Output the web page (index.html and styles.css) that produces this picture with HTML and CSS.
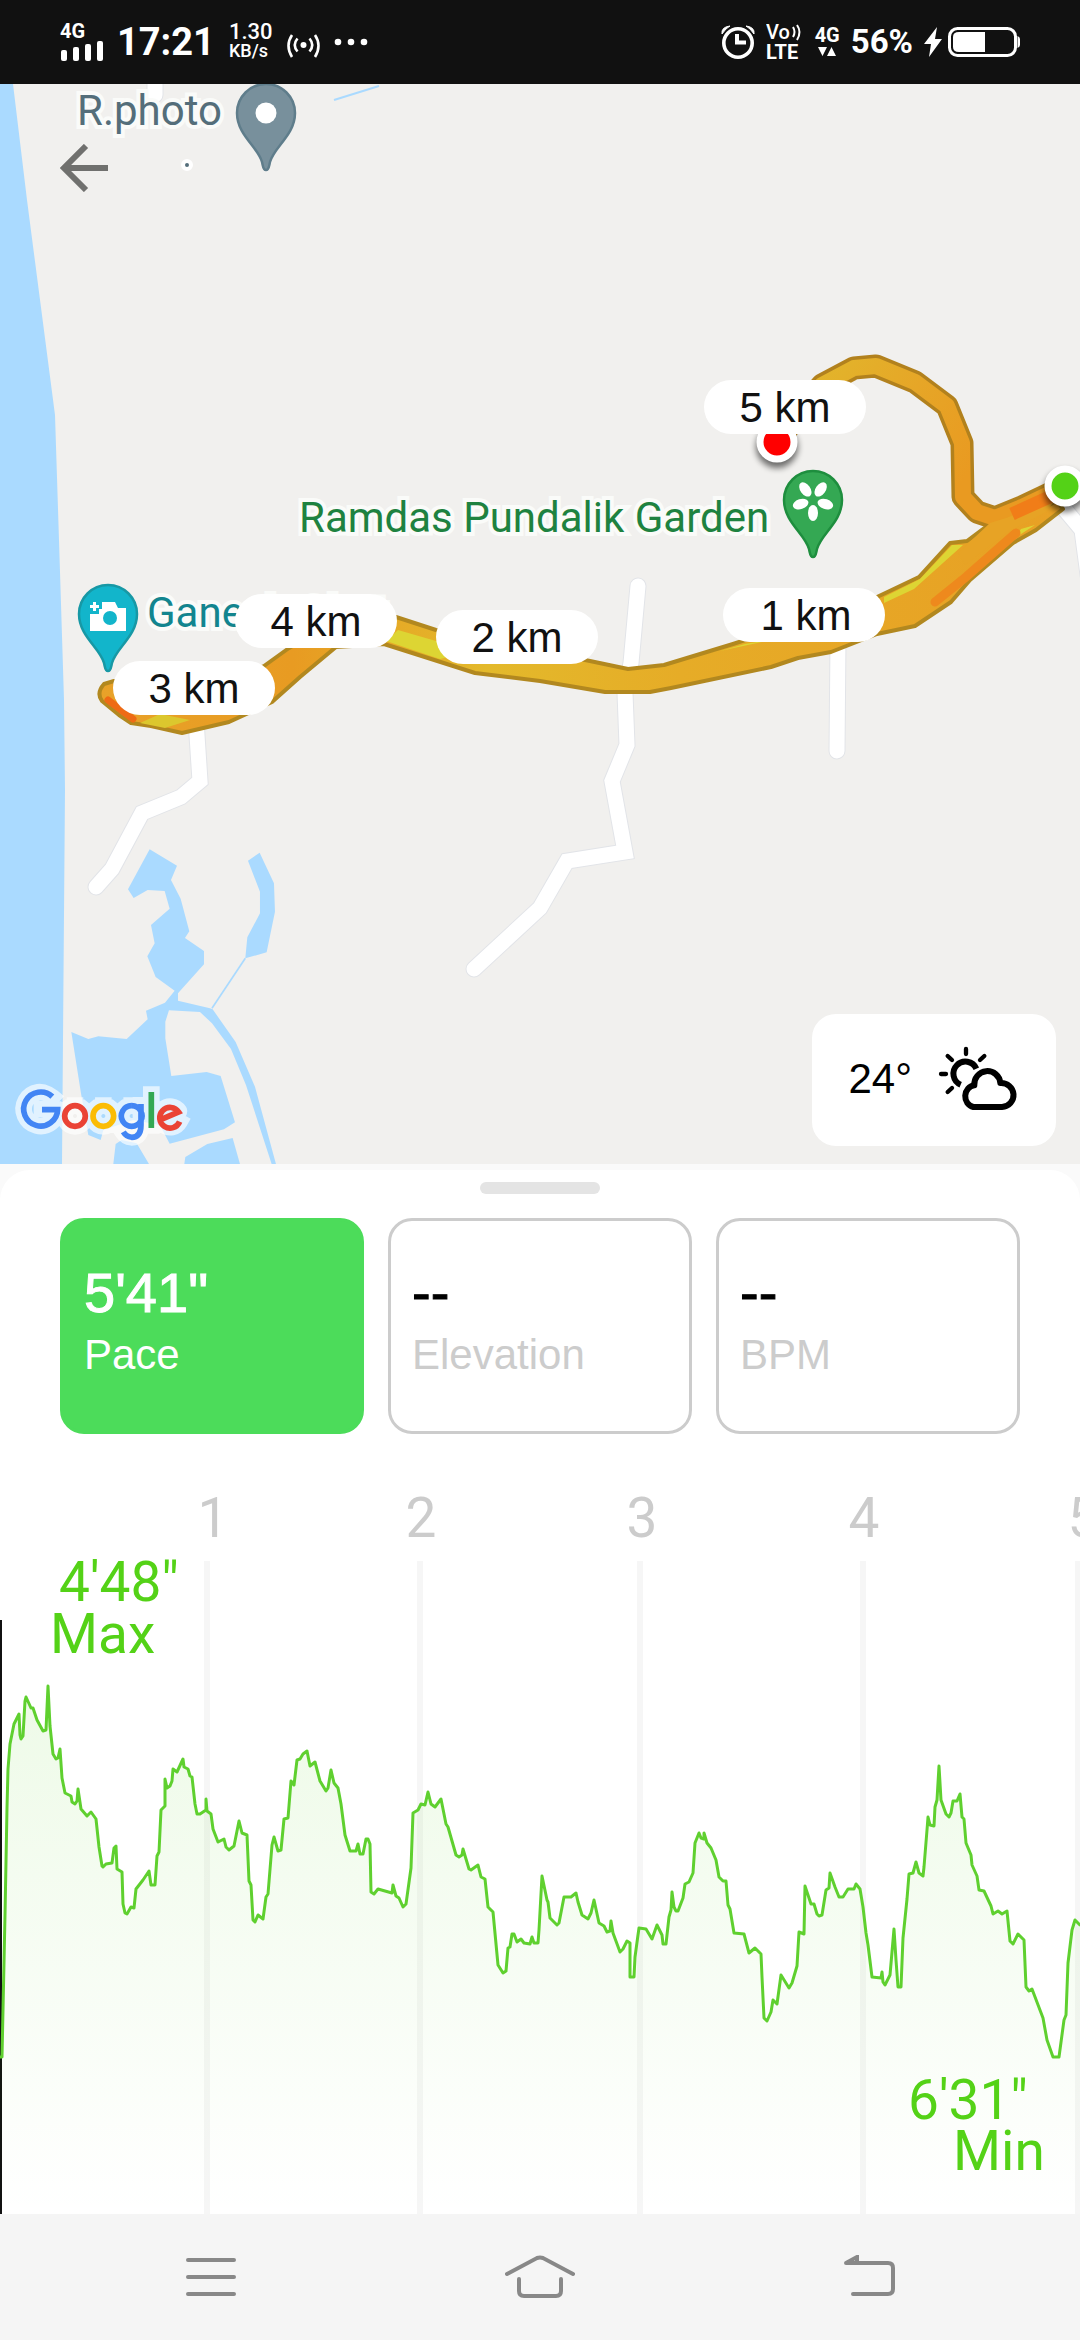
FILE: index.html
```html
<!DOCTYPE html>
<html lang="en">
<head>
<meta charset="utf-8">
<meta name="viewport" content="width=device-width, initial-scale=1">
<title>Run details</title>
<link rel="stylesheet" href="styles.css">
</head>
<body>
<header class="status">
  <div class="status-group status-left">
    <div class="signal">
      <span class="net">4G</span>
      <svg width="43" height="20" viewBox="0 0 43 20" fill="#fff"><rect x="1" y="9" width="6" height="11" rx="2"/><rect x="13" y="6" width="6" height="14" rx="2"/><rect x="25" y="3" width="6" height="17" rx="2"/><rect x="37" y="0" width="6" height="20" rx="2"/></svg>
    </div>
    <time class="clock">17:21</time>
    <div class="speed"><span class="speed-value">1.30</span><span class="speed-unit">KB/s</span></div>
    <svg class="low" width="33" height="24" viewBox="0 0 33 24" fill="none" stroke="#fff" stroke-width="2.6"><circle cx="16.500" cy="11" r="3" fill="#fff" stroke="none"/><path d="M10.500 4.500Q5 11 10.500 17.500M22.500 4.500Q28 11 22.500 17.500M5 1Q-2 11.500 5 23M28 1Q35 11.500 28 23"/></svg>
    <svg width="34" height="8" viewBox="0 0 34 8" fill="#fff"><circle cx="4" cy="4" r="3.300"/><circle cx="17" cy="4" r="3.300"/><circle cx="30" cy="4" r="3.300"/></svg>
  </div>
  <div class="status-group status-right">
    <svg width="34" height="36" viewBox="0 0 34 36" fill="none" stroke="#fff"><circle cx="17" cy="19" r="14.200" stroke-width="3.600"/><path d="M16 10V18.500H25" stroke-width="4"/><path d="M1 10Q0 3 9 2Q5 4 1 10ZM33 10Q34 3 25 2Q29 4 33 10Z" fill="#fff" stroke-width="1"/></svg>
    <svg class="volte" width="38" height="42" viewBox="0 0 38 42"><text x="0" y="18" class="volte-top">Vo</text><path d="M27 6Q30 11 27 16M31 4Q36 11 31 19" fill="none" stroke="#fff" stroke-width="2"/><text x="0" y="38" class="volte-bottom">LTE</text></svg>
    <div class="signal"><span class="net">4G</span><svg width="24" height="12" viewBox="0 0 24 12" fill="#fff"><path d="M3 2H12L7.500 11ZM12 11H21L16.500 2Z"/></svg></div>
    <span class="percent">56%</span>
    <svg width="96" height="30" viewBox="0 0 96 30"><path d="M13 0L0 17H7L5 30L18 12H11Z" fill="#fff"/><rect x="25.500" y="1.500" width="66" height="27" rx="8" fill="none" stroke="#fff" stroke-width="3"/><path d="M35 5H61V25H35Q29 25 29 20V10Q29 5 35 5Z" fill="#fff"/><path d="M93.500 9Q96 10 96 12V18Q96 20 93.500 21Z" fill="#fff"/></svg>
  </div>
</header>

<section class="map" aria-label="Route map">
  <svg class="map-canvas" viewBox="0 84 1080 1080">
    <defs>
      <linearGradient id="route" gradientUnits="userSpaceOnUse" x1="99" y1="0" x2="1070" y2="0">
        <stop offset="0" stop-color="#e8a229"/><stop offset=".2" stop-color="#e89b22"/><stop offset=".4" stop-color="#e3b92b"/><stop offset=".6" stop-color="#e6ac27"/><stop offset="1" stop-color="#e8a024"/>
      </linearGradient>
      <linearGradient id="loop" gradientUnits="userSpaceOnUse" x1="820" y1="370" x2="970" y2="470">
        <stop offset="0" stop-color="#e2b42b"/><stop offset=".5" stop-color="#e6a627"/><stop offset="1" stop-color="#e99a21"/>
      </linearGradient>
      <filter id="soft" x="-50%" y="-50%" width="200%" height="200%"><feGaussianBlur stdDeviation="3"/></filter>
      <path id="pin" d="M0 57C-3 57-3 53-4 49C-8 34-29 22-29 0A29 29 0 1 1 29 0C29 22 8 34 4 49C3 53 3 57 0 57Z" stroke-width="2.500"/>
    </defs>
    <rect y="84" width="1080" height="1080" fill="#f1f0ee"/>
    <path class="water" d="M0 84H13L27 200L55 415L59 540L64 700L65 790L62 1164H0Z"/>
    <g transform="translate(0 820) scale(.3333)">
      <path class="water" d="M449 88L531 137L513 180L542 236L568 334L555 354L612 393V433L534 520V542L630 565L638 568L707 666L765 800L828 1032H815L738 795L693 687L636 610L600 576L507 571L496 605V655L514 768L620 756L662 768L705 907L672 928L509 971L480 915L400 900L310 930L302 960L265 945L243 820L214 636L265 657L295 649L380 657L443 598L438 572L495 548L524 512L467 471L442 409L464 370L453 315L509 266L494 213L443 210L401 234L384 208Z"/>
      <path class="water" d="M340 1032L347 972L365 960L410 970L447 1032ZM553 1032L556 1011L622 972L698 954L720 1032ZM779 98L822 190L825 275L800 397L736 415L742 352L780 280V215L744 122Z"/>
      <path d="M736 415L636 565" stroke="#aadaff" stroke-width="5"/>
    </g>
    <path d="M334 100L379 86" stroke="#aadaff" stroke-width="2"/>
    <g class="road-edge"><path d="M155 80V95M196 720L200 781L181 797L142 813L112 869L96 887M638 586L631 663L625 693L627 745L612 781L625 852L567 861L540 908L474 969M838 640L837 751M1062 506L1082 530L1088 575"/></g>
    <g class="road"><path d="M155 80V95M196 720L200 781L181 797L142 813L112 869L96 887M638 586L631 663L625 693L627 745L612 781L625 852L567 861L540 908L474 969M838 640L837 751M1062 506L1082 530L1088 575"/></g>

    <path d="M1046 487L1017 500L995 520L967 541L950 543L919 577L877 597L733 644L664 665L628 669L590 661L436 630L396 617L350 612L289 648L264 666L200 690L114 681L104 684Q96 693 102 701L119 715L131 723L151 726L182 733L229 722L272 702L300 677L336 647L384 644L475 673L540 681L605 692H650L671 688L771 667L798 658L831 652L877 634L915 626L951 602L970 580L1013 543L1036 530L1063 509Z" fill="url(#route)" stroke="#b2881f" stroke-width="4" stroke-linejoin="round"/>
    <path d="M398 630L436 641L475 650L440 659L386 641ZM952 545L963 545L914 589L884 603V597L920 579ZM745 644L780 638L720 651ZM1035 525L1015 538L1021 529Z" fill="#ddd533"/>
    <path d="M140 723L165 728L190 720L160 714Z" fill="#dcc72e"/>
    <path d="M108 700L133 719" stroke="#ee6b15" stroke-width="7" stroke-linecap="round"/>
    <path d="M1016 533L966 577L935 602" fill="none" stroke="#ee891d" stroke-width="9" stroke-linecap="round"/>
    <path d="M781 438L800 410L822 385L854 368L876 366L915 382L947 406L962 443L963 497L977 512L995 518L1022 507L1062 488" fill="none" stroke="#b2811d" stroke-width="23" stroke-linejoin="round"/>
    <path d="M781 438L800 410L822 385L854 368L876 366L915 382L947 406L962 443L963 497L977 512L995 518L1022 507L1062 488" fill="none" stroke="url(#loop)" stroke-width="16" stroke-linejoin="round"/>
    <path d="M990 523L1006 518L1056 499L1046 512L1008 532L965 565L958 553Z" fill="#e7a325"/>
    <path d="M1012 514L1056 494" stroke="#f17d18" stroke-width="13"/>

    <circle cx="777" cy="447" r="21" opacity=".55" filter="url(#soft)"/>
    <circle cx="777" cy="442" r="17" fill="#f00" stroke="#fff" stroke-width="7"/>
    <circle cx="1065" cy="491" r="21" opacity=".55" filter="url(#soft)"/>
    <circle cx="1065" cy="486" r="17" fill="#54d217" stroke="#fff" stroke-width="7"/>

    <g transform="translate(266 113)"><use href="#pin" fill="#78909c" stroke="#5f7d8b"/><circle r="10.500" fill="#fff"/></g>
    <circle cx="187" cy="165" r="4" fill="#546e7a" stroke="#fff" stroke-width="4"/>
    <g transform="translate(813 500)"><use href="#pin" fill="#34a853" stroke="#1e8e3e"/>
      <g fill="#fff"><ellipse cy="13" rx="5" ry="8"/><ellipse cy="13" rx="5" ry="8" transform="rotate(72)"/><ellipse cy="13" rx="5" ry="8" transform="rotate(144)"/><ellipse cy="13" rx="5" ry="8" transform="rotate(216)"/><ellipse cy="13" rx="5" ry="8" transform="rotate(288)"/></g></g>
    <g transform="translate(108 614)"><use href="#pin" fill="#12b5cb" stroke="#1798a5"/>
      <path d="M-18 0H-9V-5H-6V-12H7L10 -6H18V17H-18ZM-18 -9H-15V-12H-12V-9H-9V-6H-12V-3H-15V-6H-18Z" fill="#fff"/><circle cx="2" cy="4" r="7" fill="#12b5cb"/></g>

    <text class="place place-grey" x="77" y="125">R.photo</text>
    <text class="place place-green" x="299" y="532">Ramdas Pundalik Garden</text>
    <text class="place place-teal" x="147" y="627">Ganesh Ghat</text>

    <g class="km">
      <rect x="704" y="380" width="162" height="54" rx="27"/><text x="785" y="422">5 km</text>
      <rect x="723" y="588" width="162" height="54" rx="27"/><text x="806" y="630">1 km</text>
      <rect x="436" y="610" width="162" height="54" rx="27"/><text x="517" y="652">2 km</text>
      <rect x="235" y="594" width="162" height="54" rx="27"/><text x="316" y="636">4 km</text>
      <rect x="113" y="661" width="162" height="54" rx="27"/><text x="194" y="703">3 km</text>
    </g>

    <g role="img" aria-label="Google" transform="translate(0 820) scale(.3333)" fill="none">
      <g stroke="#fff" stroke-opacity=".65" stroke-width="50" stroke-linejoin="round" stroke-linecap="square"><path d="M157 830A51 51 0 1 0 173 867H126M225 857A31 31 0 1 0 225.100 857M310 857A31 31 0 1 0 310.100 857M395 857A31 31 0 1 0 395.100 857M423 856V915Q423 952 395 952Q378 950 370 938M454 824V916M484 896L537 874A31 31 0 1 0 538 906"/></g>
      <g stroke-width="17"><path d="M157 830A51 51 0 1 0 173 869H126" stroke="#4285f4"/><circle cx="225" cy="888" r="31" stroke="#ea4335"/><circle cx="310" cy="888" r="31" stroke="#fbbc05"/><path d="M395 857A31 31 0 1 0 395.100 857M423 852V915Q423 952 395 952Q378 950 370 936" stroke="#4285f4"/><path d="M454 816V924" stroke="#34a853"/><path d="M484 898L536 876A31 31 0 1 0 539 905" stroke="#ea4335"/></g>
    </g>
  </svg>
  <button class="back" type="button" aria-label="Back"><svg width="48" height="48" viewBox="0 0 48 48" fill="none" stroke="#70706e" stroke-width="6"><path d="M26 2L4 24L26 46M4 24H48"/></svg></button>
  <div class="weather">
    <span>24°</span>
    <svg width="80" height="65" viewBox="474 168 240 195" fill="none" stroke="#000" stroke-width="18"><path d="M589 236A36 36 0 1 0 542 284"/><path d="M580 351A31 33 0 0 1 583 286A38 38 0 0 1 661 279A37 36 0 0 1 666 351Z" stroke-linejoin="round"/><path d="M558 177V192M503 198L516 210M613 198L600 210M483 252H498M503 306L516 294" stroke-width="13" stroke-linecap="round"/></svg>
  </div>
</section>

<main class="sheet">
  <div class="handle"></div>
  <div class="metrics">
    <button type="button" class="metric metric-active"><strong>5'41"</strong><span>Pace</span></button>
    <button type="button" class="metric"><strong>--</strong><span>Elevation</span></button>
    <button type="button" class="metric"><strong>--</strong><span>BPM</span></button>
  </div>
  <svg class="chart" viewBox="0 1480 1080 734" role="img" aria-label="Pace by kilometre">
    <defs><linearGradient id="area" gradientUnits="userSpaceOnUse" x1="0" y1="1690" x2="0" y2="2214"><stop offset="0" stop-color="#54d217" stop-opacity=".1"/><stop offset="1" stop-color="#54d217" stop-opacity="0"/></linearGradient></defs>
    <g fill="#f6f6f6"><rect x="204" y="1561" width="6" height="653"/><rect x="417" y="1561" width="6" height="653"/><rect x="637" y="1561" width="6" height="653"/><rect x="860" y="1561" width="6" height="653"/><rect x="1075" y="1561" width="6" height="653"/></g>
    <g class="axis"><text x="213" y="1537">1</text><text x="421" y="1537">2</text><text x="642" y="1537">3</text><text x="864" y="1537">4</text><text x="1083" y="1537">5</text></g>
    <rect x="0" y="1620" width="2" height="594" fill="#111"/>
    <path class="pace-line" d="M-5 2220V2057H2L5 1915L7 1808L8 1769L10 1744L14 1724L19 1714L20 1735L21 1739L23 1736L25 1701L26 1697L31 1708H33L37 1720L43 1731L46 1730L48 1686L50 1726L53 1754L56 1759L58 1758L60 1749L62 1778L65 1793L71 1796L72 1802L75 1804L77 1801L78 1789L81 1809L87 1816L91 1812L96 1819L99 1847L102 1866L103 1867L106 1864L112 1863L114 1848L116 1846L117 1869L122 1872L123 1904L125 1913L127 1914L131 1907L134 1908L136 1889L143 1880L149 1871L151 1885H155L157 1856L159 1852L161 1810L165 1806V1779L167 1788L170 1786L172 1781L173 1769L177 1772L183 1759L184 1767L188 1769L190 1776L192 1777L195 1804L197 1814H200L206 1810V1799L207 1811L211 1814L213 1829L218 1842L224 1839L226 1847L229 1850L234 1846L239 1821L242 1833L247 1835L249 1881L251 1885L253 1920L255 1922L258 1915L263 1919L266 1897L268 1894L272 1845L274 1837L278 1851L281 1850L284 1819L288 1818L291 1781L294 1785L297 1760L300 1759L303 1754L307 1751L310 1766L315 1762L320 1781L326 1791L328 1788L331 1770L334 1783L338 1788L341 1804L345 1835L350 1851H356L358 1844L360 1854H363L366 1839H368L370 1844L371 1892L374 1894L378 1889L392 1893L393 1885L396 1896L399 1898L403 1907L406 1904L411 1868L413 1813L418 1810L421 1804L425 1805L428 1792L431 1804L435 1807L441 1799L446 1824L448 1827L456 1855L459 1857L462 1855L463 1849L469 1869L471 1870L478 1865L481 1877L485 1879L488 1907L493 1912L498 1965L503 1973L506 1971L508 1948L510 1947L512 1934H514L517 1942L521 1939L524 1943L530 1944L532 1937L534 1943H538L539 1930L542 1876L547 1900L548 1902L550 1918L557 1925L559 1923L564 1897H571L576 1893L578 1902L582 1915L588 1919L591 1913L594 1900L599 1923L604 1926L607 1932L610 1931L611 1921L613 1933L620 1952L623 1949L627 1941L630 1943V1977H634L635 1957L638 1935L639 1928L646 1929L652 1939L657 1925L662 1935L663 1944H666L669 1917L671 1910L672 1892L674 1907L676 1911H678L683 1898L685 1884L689 1882L693 1873L695 1843L699 1833L701 1838L704 1839V1833L707 1843L711 1848L716 1860L719 1877L723 1881H726L728 1905L730 1909L734 1933L744 1934L749 1953L755 1948L761 1954L762 1977L764 2018L767 2021L771 2012L773 2000L777 2004L781 1975L789 1988L792 1983L797 1966L799 1932L804 1934L805 1886L811 1904H814L817 1914L819 1916L822 1915L826 1890L829 1888L830 1873L835 1887L839 1897H843L848 1889H854L856 1884L860 1889L863 1907L866 1933L868 1945L872 1977L881 1978L882 1972L883 1982L885 1985L890 1975L894 1929L896 1960L898 1987H901L903 1938L907 1899L909 1874L913 1873L916 1862L919 1873L923 1876L924 1867L927 1830L928 1817L930 1825L934 1826L935 1807L937 1800L939 1766L941 1800L946 1814L949 1817L951 1813L953 1801H957L960 1794L962 1817L964 1819L966 1843L971 1855L972 1865L977 1876L979 1890L984 1891L991 1906L993 1914L998 1911L1002 1914L1007 1911L1010 1941L1013 1944L1018 1934L1024 1940L1026 1987L1029 1991L1032 1989L1043 2018L1047 2040L1053 2057H1059L1064 2020L1066 2015L1068 1963L1072 1930L1075 1920L1080 1925H1086V2220Z"/>
    <g class="extreme"><text x="59" y="1601">4'48"</text><text x="50" y="1653">Max</text><text x="908" y="2119">6'31"</text><text x="953" y="2170">Min</text></g>
  </svg>
</main>

<nav class="system">
  <button type="button" aria-label="Recent apps"><svg width="50" height="44" viewBox="0 0 50 44"><path d="M2 5H48M2 22H48M2 39H48"/></svg></button>
  <button type="button" aria-label="Home"><svg width="70" height="44" viewBox="0 0 70 44"><path d="M2 19L32 3Q35 2 38 3L68 19M14 24V36Q14 41 19 41H51Q56 41 56 36V24"/></svg></button>
  <button type="button" aria-label="Back"><svg width="52" height="44" viewBox="0 0 52 44"><path d="M3 8H45Q50 8 50 13V34Q50 39 45 39H10M3 8L14 2V8Z"/></svg></button>
</nav>
</body>
</html>
```
FILE: styles.css
```css
* { box-sizing: border-box; }
body {
  margin: 0;
  min-height: 100vh;
  display: flex;
  flex-direction: column;
  background: #fafafa;
  font-family: "Liberation Sans", Arial, sans-serif;
}
svg { display: block; }
button { border: 0; padding: 0; background: none; font: inherit; text-align: left; }

.status {
  height: 84px;
  padding: 0 60px;
  display: flex;
  justify-content: space-between;
  align-items: center;
  background: #111;
  color: #fff;
  font-family: Roboto, sans-serif;
  font-weight: 700;
}
.status-group { display: flex; align-items: center; }
.status-left { gap: 14px; }
.status-right { gap: 11px; }
.signal { display: flex; flex-direction: column; gap: 2px; }
.net { font-size: 20px; line-height: 16px; }
.clock { font-size: 38px; line-height: 44px; }
.speed { display: flex; flex-direction: column; font-weight: 500; }
.speed-value { font-size: 22px; line-height: 18px; }
.speed-unit { font-size: 18px; line-height: 20px; }
.low { margin-top: 8px; }
.volte { fill: #fff; }
.volte-top { font-size: 20px; font-weight: 500; }
.volte-bottom { font-size: 20px; }
.percent { font-size: 33px; line-height: 40px; }

.map { position: relative; overflow: hidden; }
.map-canvas { width: 100%; }
.water { fill: #aadaff; }
.road, .road-edge { fill: none; stroke-linecap: round; }
.road { stroke: #fff; stroke-width: 15px; }
.road-edge { stroke: #e2e4e8; stroke-width: 17px; }
.place {
  font-family: Roboto, sans-serif;
  font-size: 42px;
  paint-order: stroke;
  stroke: #fafbf9;
  stroke-width: 8px;
}
.place-grey { fill: #546e7a; }
.place-green { fill: #1e8240; }
.place-teal { fill: #12858f; }
.km { fill: #fff; font-size: 42px; text-anchor: middle; }
.km text { fill: #111; }
.back { position: absolute; left: 60px; top: 60px; }
.weather {
  position: absolute;
  right: 24px;
  bottom: 18px;
  padding: 32px 38px 35px 36px;
  display: flex;
  align-items: center;
  gap: 26px;
  border-radius: 24px;
  background: #fff;
  color: #000;
  font-size: 42px;
}

.sheet {
  flex: 1;
  margin-top: 6px;
  padding-top: 12px;
  border-radius: 30px 30px 0 0;
  background: #fff;
}
.handle { width: 120px; height: 12px; margin: 0 auto; border-radius: 6px; background: #e4e4e4; }
.metrics {
  display: grid;
  grid-template-columns: repeat(3, 1fr);
  gap: 24px;
  padding: 24px 60px 46px;
}
.metric {
  height: 216px;
  padding: 0 21px 10px;
  display: flex;
  flex-direction: column;
  justify-content: center;
  gap: 8px;
  border: 3px solid #ccc;
  border-radius: 24px;
  color: #ccc;
  font-size: 42px;
  line-height: 48px;
}
.metric strong {
  color: #000;
  font-size: 56px;
  font-weight: 400;
  line-height: 60px;
  -webkit-text-stroke: 1px currentColor;
}
.metric-active { border-color: #4cdc5a; background: #4cdc5a; color: #fff; }
.metric-active strong { color: #fff; }

.chart { width: 100%; font-family: Roboto, sans-serif; font-size: 55px; }
.axis { fill: #ccc; text-anchor: middle; }
.extreme { fill: #54d217; }
.pace-line { fill: url(#area); stroke: #5fd02f; stroke-width: 3px; stroke-linejoin: round; }

.system {
  height: 126px;
  padding: 0 46px;
  display: grid;
  grid-template-columns: repeat(3, 1fr);
  justify-items: center;
  align-items: center;
  background: #f5f5f5;
}
.system svg { fill: none; stroke: #888; stroke-width: 4px; stroke-linecap: round; }
```
